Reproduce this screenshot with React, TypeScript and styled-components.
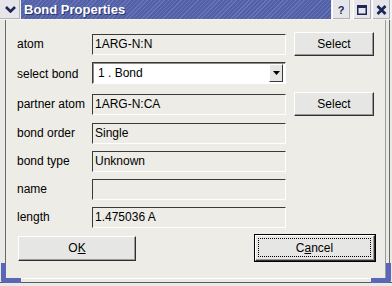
import { Fragment } from "react";
import styled, { createGlobalStyle } from "styled-components";

const GlobalStyle = createGlobalStyle`
	html, body {
		margin: 0;
		padding: 0;
		background: #ffffff;
	}
	body {
		font-family: "Liberation Sans", Arial, sans-serif;
		font-size: 12px;
		color: #000;
	}
`;

const Window = styled.div`
	position: relative;
	width: 392px;
	height: 286px;
	overflow: hidden;
	background: #e9e9e6;
	display: flex;
	flex-direction: column;
`;

const TitleBar = styled.div`
	display: flex;
	height: 19px;
	background: #f2f2f0;
	border-bottom: 1px solid #f4f4f2;
`;

const MenuButton = styled.div`
	width: 20px;
	height: 19px;
	margin-right: 1px;
	display: flex;
	align-items: center;
	justify-content: center;
	background: #e6e6ea;
	box-shadow: inset -1px -1px 0 #b4b4bc;
`;

const Title = styled.div`
	flex: 1;
	padding-left: 3px;
	background: repeating-linear-gradient(
		135deg,
		#5260a7 0px,
		#5260a7 2px,
		#6974b6 2px,
		#6974b6 3px
	);
	color: #ffffff;
	font-weight: bold;
	font-size: 13px;
	line-height: 19px;
	text-shadow: 1px 1px 0 #2c3468;
	white-space: nowrap;
`;

const TitleButtons = styled.div`
	display: flex;
	padding: 0 2px 0 1px;
	gap: 1px;
`;

const TitleButton = styled.div<{ $gap?: number }>`
	width: 18px;
	height: 19px;
	margin-right: ${(p) => p.$gap ?? 0}px;
	display: flex;
	align-items: center;
	justify-content: center;
	background: #e6e6ea;
	box-shadow: inset 1px 0 0 #ffffff, inset -1px -1px 0 #b0b0b8;
	color: #1c2755;
	font-weight: bold;
	font-size: 11px;
`;

const Frame = styled.div`
	flex: 1;
	display: flex;
	padding: 0 6px 7px 5px;
	background: linear-gradient(to left, #e9e9e6 0 2px, #6a6a6a 2px 3px, #e9e9e6 3px);
	box-shadow: inset 0 -3px 0 #e9e9e6, inset 0 -4px 0 #5a5a5a;
`;

const Body = styled.div`
	flex: 1;
	display: flex;
	flex-direction: column;
	padding: 12px 0 0 11px;
	background: #edece6;
	border-left: 1px solid #6a6a6a;
	border-right: 1px solid #9c9c9c;
	border-bottom: 1px solid #ffffff;
`;

const Form = styled.div`
	display: grid;
	grid-template-columns: 67px 194px 80px;
	grid-template-rows: 24px 24px 24px 22px 22px 22px 22px;
	column-gap: 8px;
	row-gap: 6px;
	align-items: center;
`;

const Label = styled.div`
	grid-column: 1;
	white-space: nowrap;
`;

const Field = styled.div`
	grid-column: 2;
	box-sizing: border-box;
	height: 21px;
	padding-left: 2px;
	line-height: 19px;
	background: #edece6;
	border: 1px solid;
	border-color: #3a3a3a #ffffff #ffffff #3a3a3a;
	white-space: nowrap;
	overflow: hidden;
`;

const Combo = styled.div`
	grid-column: 2;
	align-self: start;
	box-sizing: border-box;
	height: 22px;
	display: flex;
	align-items: center;
	padding: 0 2px 0 5px;
	background: #ffffff;
	border: 1px solid;
	border-color: #3a3a3a #ffffff #ffffff #3a3a3a;
	box-shadow: inset 1px 1px 0 #8c8c8c;
`;

const ComboText = styled.span`
	flex: 1;
`;

const ComboArrow = styled.div`
	width: 14px;
	height: 18px;
	box-sizing: border-box;
	display: flex;
	align-items: center;
	justify-content: center;
	background: #e6e6e4;
	border: 1px solid;
	border-color: #ffffff #3a3a3a #3a3a3a #ffffff;
`;

const Button = styled.button<{ $width: number; $height?: number; $default?: boolean }>`
	position: relative;
	box-sizing: border-box;
	width: ${(p) => p.$width}px;
	height: ${(p) => p.$height ?? 24}px;
	padding: 0;
	font-family: "Liberation Sans", Arial, sans-serif;
	font-size: 12px;
	color: #000;
	background: #e6e6e4;
	border: 1px solid;
	border-color: #ffffff #303030 #303030 #ffffff;
	box-shadow: inset -1px -1px 0 #9a9a9a
		${(p) => (p.$default ? ", 0 0 0 1px #000" : "")};
	outline: none;
`;

const SideButton = styled(Button)`
	grid-column: 3;
`;

const FocusRect = styled.span`
	position: absolute;
	inset: 2px 3px 3px 2px;
	border: 1px dotted #000;
	display: flex;
	align-items: center;
	justify-content: center;
`;

const ButtonRow = styled.div`
	display: flex;
	justify-content: space-between;
	align-items: center;
	width: 358px;
	margin-top: 7px;
	padding-left: 1px;
	box-sizing: border-box;
`;

const Corner = styled.span<{ $side: "left" | "right" }>`
	position: absolute;
	top: 263px;
	${(p) => p.$side}: 1px;
	width: 20px;
	height: 20px;
	box-sizing: border-box;
	border-bottom: 5px solid #5b66b6;
	border-${(p) => p.$side}: 5px solid #5b66b6;
	border-bottom-${(p) => p.$side}-radius: 4px;
`;

const Chevron = () => (
	<svg width="11" height="7" viewBox="0 0 11 7">
		<path d="M1 1 L5.5 5.5 L10 1" fill="none" stroke="#1c2755" strokeWidth="2.6" />
	</svg>
);

const MaxIcon = () => (
	<svg width="10" height="10" viewBox="0 0 10 10">
		<rect x="0.75" y="0.75" width="8.5" height="8.5" fill="none" stroke="#1c2755" strokeWidth="1.5" />
		<rect x="0" y="0" width="10" height="3" fill="#1c2755" />
	</svg>
);

const CloseIcon = () => (
	<svg width="11" height="10" viewBox="0 0 11 10">
		<path d="M1.5 1 L9.5 9 M9.5 1 L1.5 9" stroke="#1c2755" strokeWidth="2.8" />
	</svg>
);

const DownTriangle = () => (
	<svg width="7" height="4" viewBox="0 0 7 4">
		<path d="M0 0 H7 L3.5 4 Z" fill="#000" />
	</svg>
);

const rows = [
	{ label: "bond order", value: "Single" },
	{ label: "bond type", value: "Unknown" },
	{ label: "name", value: "" },
	{ label: "length", value: "1.475036 A" },
];

const App = () => {
	return (
		<>
			<GlobalStyle />
			<Window>
				<TitleBar>
					<MenuButton>
						<Chevron />
					</MenuButton>
					<Title>Bond Properties</Title>
					<TitleButtons>
						<TitleButton $gap={2}>?</TitleButton>
						<TitleButton>
							<MaxIcon />
						</TitleButton>
						<TitleButton>
							<CloseIcon />
						</TitleButton>
					</TitleButtons>
				</TitleBar>
				<Frame>
					<Body>
						<Form>
							<Label>atom</Label>
							<Field>1ARG-N:N</Field>
							<SideButton $width={80}>Select</SideButton>

							<Label>select bond</Label>
							<Combo>
								<ComboText>1 . Bond</ComboText>
								<ComboArrow>
									<DownTriangle />
								</ComboArrow>
							</Combo>
							<span />

							<Label>partner atom</Label>
							<Field>1ARG-N:CA</Field>
							<SideButton $width={80}>Select</SideButton>

							{rows.map((row) => (
								<Fragment key={row.label}>
									<Label>{row.label}</Label>
									<Field>{row.value}</Field>
									<span />
								</Fragment>
							))}
						</Form>
						<ButtonRow>
							<Button $width={118} $height={25}>
								O<u>K</u>
							</Button>
							<Button $width={120} $height={26} $default>
								<FocusRect>
									C<u>a</u>ncel
								</FocusRect>
							</Button>
						</ButtonRow>
					</Body>
				</Frame>
				<Corner $side="left" />
				<Corner $side="right" />
			</Window>
		</>
	);
};

export default App;
